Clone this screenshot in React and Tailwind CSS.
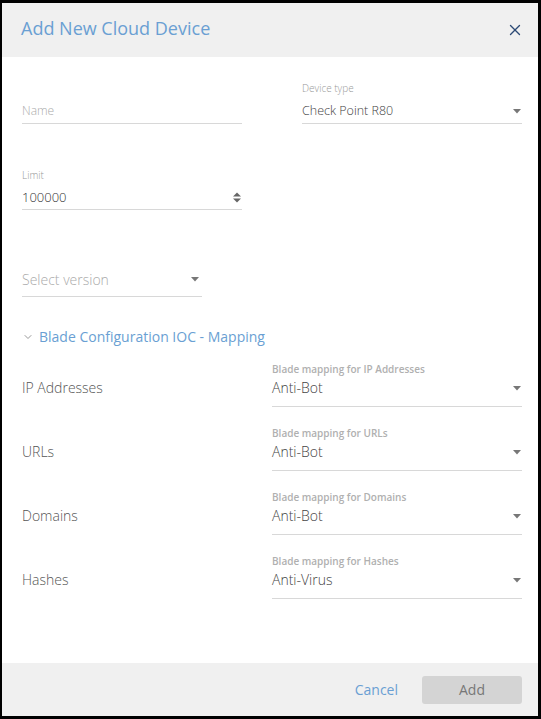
import { X, ChevronDown } from "lucide-react";

const Caret = () => (
    <svg width="8" height="5" viewBox="0 0 8 5" className="shrink-0">
        <path d="M0 0h8L4 4.5z" fill="#777" />
    </svg>
);

const Spinner = () => (
    <svg width="8" height="11" viewBox="0 0 8 11" className="shrink-0">
        <path d="M4 0.5L8 4.5H0z" fill="#666" />
        <path d="M0 6.5h8L4 10.5z" fill="#666" />
    </svg>
);

const BLADES = [
    { id: "ip", name: "IP Addresses", value: "Anti-Bot" },
    { id: "urls", name: "URLs", value: "Anti-Bot" },
    { id: "domains", name: "Domains", value: "Anti-Bot" },
    { id: "hashes", name: "Hashes", value: "Anti-Virus" },
];

export default function App() {
    return (
        <div className="w-[541px] h-[719px] bg-black pt-[3px] pl-[2px] pr-[3px] pb-[3px] font-['Open_Sans',sans-serif] font-light">
            <div className="flex flex-col h-full bg-white">
                {/* header */}
                <div className="h-[54px] shrink-0 bg-[#f0f0f0] flex items-center justify-between pl-[19px] pr-[14px]">
                    <h2 className="text-[18px] font-normal text-[#6a9fd3] leading-none mb-[4px]">Add New Cloud Device</h2>
                    <X size={18} strokeWidth={1.8} className="text-[#2c4a75]" />
                </div>

                {/* body */}
                <div className="flex-1 pl-[20px] pr-[16px]">
                    <div className="grid grid-cols-2 gap-x-[60px] mt-[24px]">
                        <div className="pt-[18px]">
                            <div className="h-[25px] flex items-center border-b border-[#d8d8d8] text-[12px] text-[#aaa]">
                                Name
                            </div>
                        </div>
                        <div>
                            <div className="text-[10px] text-[#999] leading-[14px] h-[18px]">Device type</div>
                            <div className="h-[25px] flex items-center justify-between border-b border-[#d8d8d8] text-[12.5px] text-[#444] pr-[1px]">
                                <span>Check Point R80</span>
                                <Caret />
                            </div>
                        </div>
                    </div>

                    <div className="w-[220px] mt-[44px]">
                        <div className="text-[10px] text-[#999] leading-[14px] h-[18px]">Limit</div>
                        <div className="h-[24px] flex items-center justify-between border-b border-[#d8d8d8] text-[13px] text-[#333] pr-[1px]">
                            <span>100000</span>
                            <Spinner />
                        </div>
                    </div>

                    <div className="w-[180px] mt-[57px]">
                        <div className="h-[30px] flex items-center justify-between border-b border-[#d8d8d8] text-[14px] text-[#aaa] pr-[3px] pb-[4px]">
                            <span>Select version</span>
                            <Caret />
                        </div>
                    </div>

                    <div className="flex items-center gap-[5px] mt-[29px] text-[14px] font-normal text-[#6a9fd3]">
                        <ChevronDown size={12} strokeWidth={2} className="text-[#999]" />
                        <span>Blade Configuration IOC - Mapping</span>
                    </div>

                    <div className="mt-[15px] flex flex-col gap-[19px]">
                        {BLADES.map((b) => (
                            <div key={b.id} className="grid grid-cols-[1fr_250px] items-start">
                                <div className="text-[14px] text-[#555] pt-[16px] leading-[20px]">{b.name}</div>
                                <div>
                                    <div className="text-[10px] font-semibold text-[#b0b0b0] leading-[14px] h-[14px]">
                                        Blade mapping for {b.name}
                                    </div>
                                    <div className="h-[31px] flex items-center justify-between border-b border-[#d8d8d8] text-[14px] text-[#444] pr-[1px] pt-[2px] pb-[8px] leading-[20px]">
                                        <span>{b.value}</span>
                                        <Caret />
                                    </div>
                                </div>
                            </div>
                        ))}
                    </div>
                </div>

                {/* footer */}
                <div className="h-[53px] shrink-0 bg-[#f0f0f0] flex items-center justify-end gap-[24px] pr-[16px]">
                    <button className="text-[14px] font-normal text-[#6a9fd3]">Cancel</button>
                    <button className="w-[100px] h-[28px] rounded-[3px] bg-[#d4d4d4] text-[14px] font-normal text-[#777]">Add</button>
                </div>
            </div>
        </div>
    );
}
